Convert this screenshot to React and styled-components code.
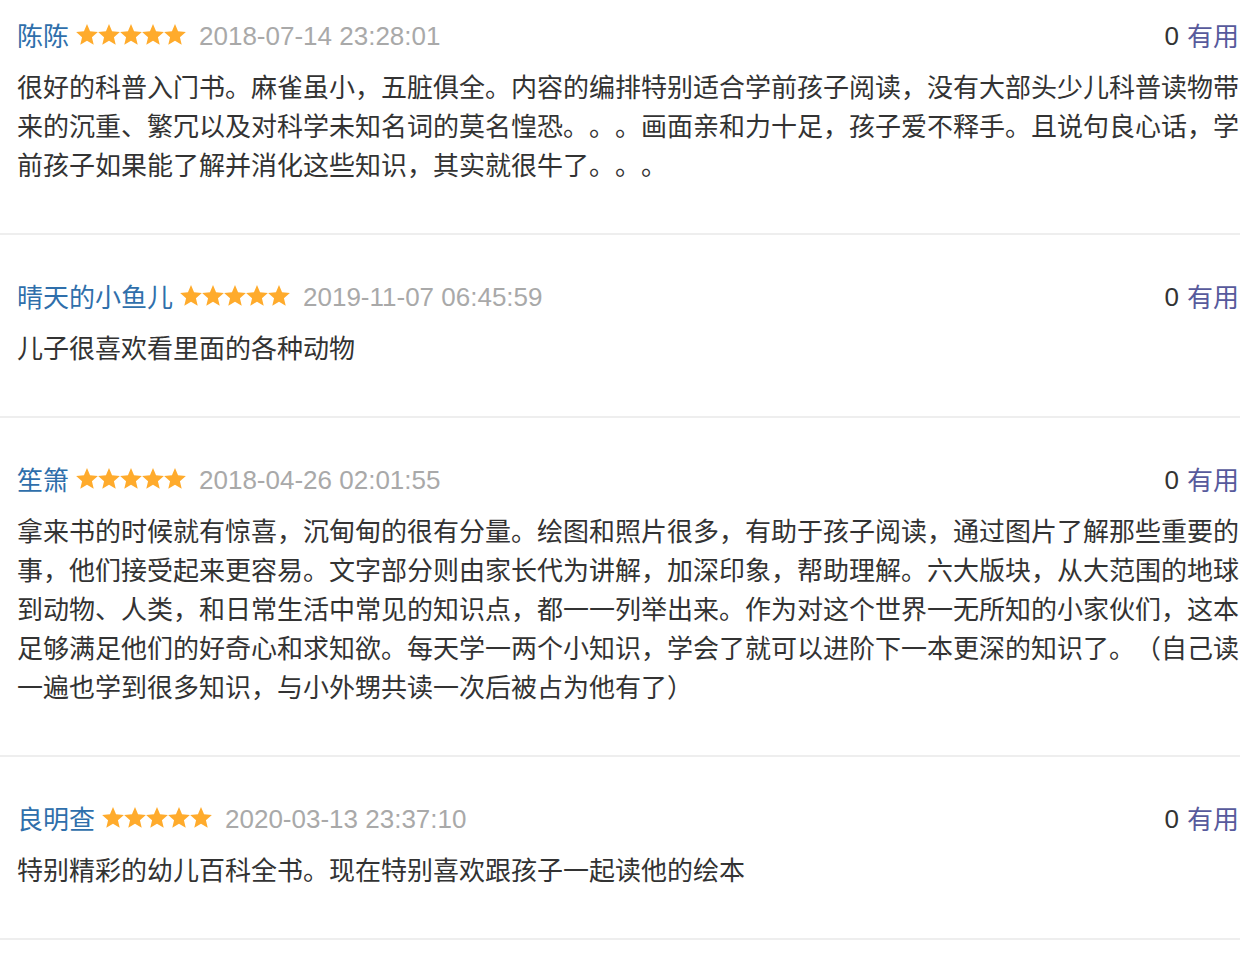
import React from "react";
import styled, { createGlobalStyle } from "styled-components";

const GlobalStyle = createGlobalStyle`
  html, body { margin: 0; padding: 0; background: #fff; }
  body {
    font-family: "Liberation Sans", "Noto Sans CJK SC", sans-serif;
    color: #333;
    -webkit-font-smoothing: antialiased;
  }
`;

const List = styled.div`
  width: 1240px;
  display: flex;
  flex-direction: column;
`;

const Item = styled.div`
  padding: 43px 1px 50px 17px;
  border-bottom: 2px solid #eeeeee;
  &:first-child { padding-top: 17px; }
`;

const Header = styled.div`
  display: flex;
  align-items: center;
  justify-content: space-between;
  height: 39px;
  font-size: 26px;
  line-height: 39px;
  white-space: nowrap;
`;

const Left = styled.div`
  display: flex;
  align-items: center;
`;

const Name = styled.span`
  color: #2f6fab;
  font-family: "Noto Sans CJK SC", sans-serif;
  padding-bottom: 4px;
`;

const Stars = styled.span`
  display: flex;
  margin: 0 13px 4px 7px;
`;

const StarIcon = styled.svg`
  width: 22px;
  height: 21px;
  display: block;
`;

const Date = styled.span`
  color: #a9a9a9;
  font-family: "Liberation Sans", sans-serif;
`;

const Useful = styled.div`
  display: flex;
  align-items: center;
  gap: 8px;
`;

const Count = styled.span`
  color: #333;
  font-family: "Liberation Sans", sans-serif;
`;

const UsefulLabel = styled.span`
  color: #575a9c;
  font-family: "Noto Sans CJK SC", sans-serif;
  padding-bottom: 4px;
`;

const Body = styled.p`
  margin: 10px 0 0;
  width: 1222px;
  font-size: 26px;
  line-height: 39px;
  font-family: "Noto Sans CJK SC", sans-serif;
  color: #333;
  text-spacing-trim: space-all;
`;

const Star = () => (
  <StarIcon viewBox="1.4 1.4 21.2 20.2">
    <polygon
      fill="#ffab2c"
      points="12,1.5 14.94,8.45 22.46,9.1 16.76,14.05 18.47,21.4 12,17.5 5.53,21.4 7.24,14.05 1.54,9.1 9.06,8.45"
    />
  </StarIcon>
);

const reviews = [
  {
    name: "陈陈",
    date: "2018-07-14 23:28:01",
    text: "很好的科普入门书。麻雀虽小，五脏俱全。内容的编排特别适合学前孩子阅读，没有大部头少儿科普读物带来的沉重、繁冗以及对科学未知名词的莫名惶恐。。。画面亲和力十足，孩子爱不释手。且说句良心话，学前孩子如果能了解并消化这些知识，其实就很牛了。。。",
  },
  {
    name: "晴天的小鱼儿",
    date: "2019-11-07 06:45:59",
    text: "儿子很喜欢看里面的各种动物",
  },
  {
    name: "笙箫",
    date: "2018-04-26 02:01:55",
    text: "拿来书的时候就有惊喜，沉甸甸的很有分量。绘图和照片很多，有助于孩子阅读，通过图片了解那些重要的事，他们接受起来更容易。文字部分则由家长代为讲解，加深印象，帮助理解。六大版块，从大范围的地球到动物、人类，和日常生活中常见的知识点，都一一列举出来。作为对这个世界一无所知的小家伙们，这本足够满足他们的好奇心和求知欲。每天学一两个小知识，学会了就可以进阶下一本更深的知识了。（自己读一遍也学到很多知识，与小外甥共读一次后被占为他有了）",
  },
  {
    name: "良明查",
    date: "2020-03-13 23:37:10",
    text: "特别精彩的幼儿百科全书。现在特别喜欢跟孩子一起读他的绘本",
  },
];

export default function App() {
  return (
    <>
      <GlobalStyle />
      <List>
        {reviews.map((r) => (
          <Item key={r.name}>
            <Header>
              <Left>
                <Name>{r.name}</Name>
                <Stars>
                  {[0, 1, 2, 3, 4].map((i) => (
                    <Star key={i} />
                  ))}
                </Stars>
                <Date>{r.date}</Date>
              </Left>
              <Useful>
                <Count>0</Count>
                <UsefulLabel>有用</UsefulLabel>
              </Useful>
            </Header>
            <Body>{r.text}</Body>
          </Item>
        ))}
      </List>
    </>
  );
}
